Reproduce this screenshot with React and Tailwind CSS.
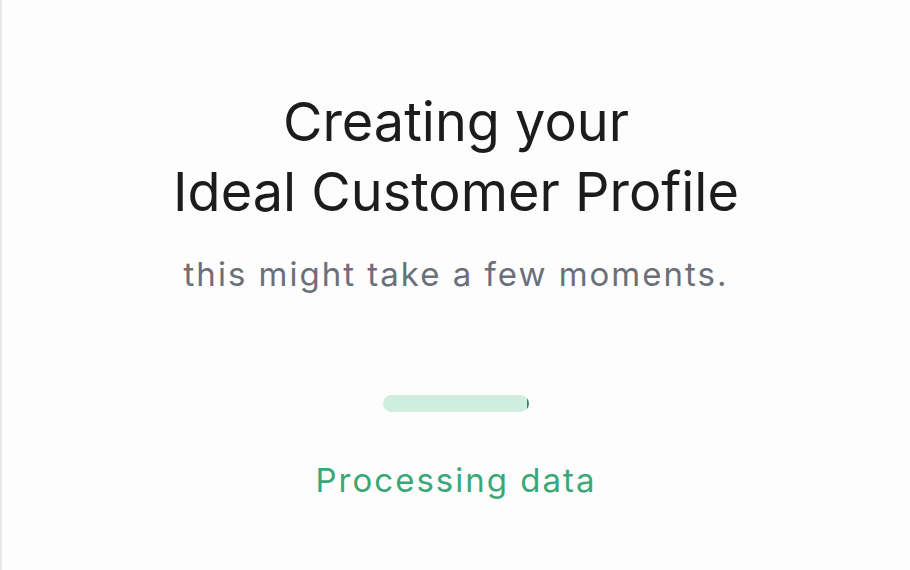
import React from "react";

const App = () => {
  return (
    <div className="w-[910px] h-[570px] bg-[#fdfdfd] border-l-2 border-[#e8e8e8] flex flex-col items-center font-['Inter',sans-serif]">
      <h1 className="mt-[87px] text-[54px] leading-[70px] text-[#1c1c1c] text-center font-normal">
        Creating your
        <br />
        Ideal Customer Profile
      </h1>
      <p className="mt-[27px] text-[33px] leading-[40px] tracking-[2px] text-[#6b6f7a]">
        this might take a few moments.
      </p>

      <div className="mt-[101px] w-[146px] h-[17px] rounded-full bg-[#cfeee0] overflow-hidden flex justify-end">
        <div className="w-[2px] h-full bg-[#2e8a62]" />
      </div>

      <p className="mt-[48px] text-[33px] leading-[40px] tracking-[2px] text-[#3aa876]">
        Processing data
      </p>
    </div>
  );
};

export default App;
